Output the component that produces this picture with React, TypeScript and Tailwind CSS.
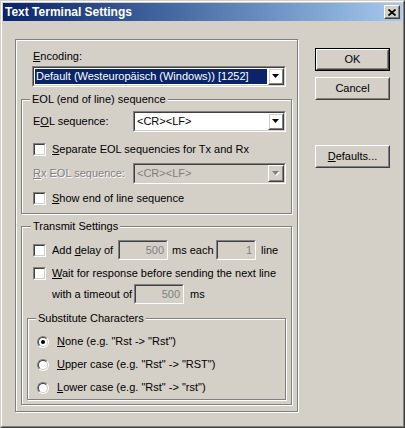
import type { ReactNode } from "react";

// Win2000 style 3D edges
const Sunken = ({
  className = "",
  innerClass = "",
  children,
}: {
  className?: string;
  innerClass?: string;
  children?: ReactNode;
}) => (
  <div
    className={
      "shrink-0 border border-t-[#808080] border-l-[#808080] border-r-white border-b-white " +
      className
    }
  >
    <div
      className={
        "h-full w-full border border-t-[#404040] border-l-[#404040] border-r-[#d4d0c8] border-b-[#d4d0c8] " +
        innerClass
      }
    >
      {children}
    </div>
  </div>
);

const Raised = ({ className = "", children }: { className?: string; children?: ReactNode }) => (
  <div
    className={
      "shrink-0 border border-t-white border-l-white border-r-[#404040] border-b-[#404040] " + className
    }
  >
    <div className="h-full w-full border border-t-[#d4d0c8] border-l-[#d4d0c8] border-r-[#808080] border-b-[#808080] flex items-center justify-center">
      {children}
    </div>
  </div>
);

const Arrow = ({ disabled }: { disabled?: boolean }) => (
  <svg width="8" height="5" viewBox="0 0 8 5">
    {disabled && <polygon points="1,1 8,1 4.5,5" fill="#fff" />}
    <polygon points="0,0 7,0 3.5,4" fill={disabled ? "#808080" : "#000"} />
  </svg>
);

const Combo = ({
  className,
  text,
  selected,
  disabled,
}: {
  className: string;
  text: string;
  selected?: boolean;
  disabled?: boolean;
}) => (
  <Sunken className={"h-[21px] " + className} innerClass={"flex " + (disabled ? "bg-[#d4d0c8]" : "bg-white")}>
    <div className="flex-1 flex p-[1px] min-w-0">
      <div
        className={
          "flex-1 flex items-center pl-[1px] whitespace-nowrap overflow-hidden " +
          (selected ? "bg-[#0a246a] text-white" : disabled ? "text-[#808080]" : "")
        }
      >
        {text}
      </div>
    </div>
    <Raised className="w-[16px] h-full">
      <Arrow disabled={disabled} />
    </Raised>
  </Sunken>
);

const Check = () => <Sunken className="w-[13px] h-[13px]" innerClass="bg-white" />;

const Radio = ({ on }: { on?: boolean }) => (
  <div className="shrink-0 w-[12px] h-[12px] rounded-full border border-t-[#808080] border-l-[#808080] border-r-white border-b-white">
    <div className="h-full w-full rounded-full border border-t-[#404040] border-l-[#404040] border-r-[#d4d0c8] border-b-[#d4d0c8] bg-white flex items-center justify-center">
      {on && <div className="w-[4px] h-[4px] rounded-full bg-black" />}
    </div>
  </div>
);

const Field = ({ className, value }: { className: string; value: string }) => (
  <Sunken
    className={"h-[20px] " + className}
    innerClass="bg-[#d4d0c8] flex items-center justify-end pr-[2px] text-[#808080]"
  >
    {value}
  </Sunken>
);

const Group = ({
  title,
  className,
  legend,
  children,
}: {
  title: string;
  className: string;
  legend: string;
  children?: ReactNode;
}) => (
  <div
    className={
      "relative shrink-0 border border-[#808080] shadow-[inset_1px_1px_0_#fff,1px_1px_0_#fff] flex flex-col " +
      className
    }
  >
    <span className={"absolute -top-[7px] bg-[#d4d0c8] px-[2px] leading-[13px] whitespace-nowrap " + legend}>
      {title}
    </span>
    {children}
  </div>
);

const U = ({ children }: { children: ReactNode }) => <span className="underline underline-offset-[1px]">{children}</span>;

export default function App() {
  return (
    <div className="w-[405px] h-[428px] bg-[#d4d0c8] font-['Liberation_Sans',Arial,sans-serif] text-[11px] leading-[13px] text-black border border-t-[#d4d0c8] border-l-[#d4d0c8] border-r-[#404040] border-b-[#404040]">
      <div className="h-full border border-t-white border-l-white border-r-[#808080] border-b-[#808080] p-[1px]">
        {/* title bar */}
        <div className="h-[18px] flex items-center justify-between bg-linear-to-r from-[#0a246a] to-[#a6caf0] pl-[2px] pr-[2px]">
          <span className="text-white font-bold text-[12px] leading-[14px]">Text Terminal Settings</span>
          <Raised className="w-[16px] h-[14px] bg-[#d4d0c8]">
            <svg width="8" height="7" viewBox="0 0 8 7">
              <path d="M0.5 0.5 L7.5 6.5 M7.5 0.5 L0.5 6.5" stroke="#000" strokeWidth="1.7" />
            </svg>
          </Raised>
        </div>

        <div className="flex items-start pl-[12px] pt-[18px]">
          {/* main panel */}
          <div className="w-[283px] h-[373px] shrink-0 border border-[#808080] shadow-[inset_1px_1px_0_#fff,1px_1px_0_#fff] flex flex-col">
            <div className="pl-[17px] pt-[10px]">
              <U>E</U>ncoding:
            </div>
            <Combo
              className="w-[254px] ml-[16px] mt-[3px]"
              text="Default (Westeuropäisch (Windows)) [1252]"
              selected
            />

            <Group title="EOL (end of line) sequence" legend="left-[8px]" className="w-[271px] h-[115px] ml-[5px] mt-[12px]">
              <div className="flex items-center mt-[11px]">
                <span className="pl-[11px] w-[111px] shrink-0">
                  E<U>O</U>L sequence:
                </span>
                <Combo className="w-[153px]" text="<CR><LF>" />
              </div>
              <div className="flex items-center mt-[11px] pl-[11px]">
                <Check />
                <span className="ml-[6px]">
                  <U>S</U>eparate EOL sequencies for Tx and Rx
                </span>
              </div>
              <div className="flex items-center mt-[7px]">
                <span className="pl-[11px] w-[111px] shrink-0 text-[#808080] [text-shadow:1px_1px_0_#fff]">
                  <U>R</U>x EOL sequence:
                </span>
                <Combo className="w-[153px]" text="<CR><LF>" disabled />
              </div>
              <div className="flex items-center mt-[8px] pl-[11px]">
                <Check />
                <span className="ml-[6px]">
                  <U>S</U>how end of line sequence
                </span>
              </div>
            </Group>

            <Group title="Transmit Settings" legend="left-[9px]" className="w-[271px] h-[179px] ml-[5px] mt-[12px]">
              <div className="flex items-center mt-[13px] pl-[11px] h-[20px]">
                <Check />
                <span className="ml-[6px] w-[66px] shrink-0">
                  Add <U>d</U>elay of
                </span>
                <Field className="w-[50px]" value="500" />
                <span className="pl-[4px] w-[48px] shrink-0">ms each</span>
                <Field className="w-[40px]" value="1" />
                <span className="ml-[5px]">line</span>
              </div>
              <div className="flex items-center mt-[7px] pl-[11px]">
                <Check />
                <span className="ml-[6px]">
                  <U>W</U>ait for response before sending the next line
                </span>
              </div>
              <div className="flex items-center mt-[4px] h-[20px]">
                <span className="pl-[30px] w-[112px] shrink-0">with a timeout of</span>
                <Field className="w-[50px]" value="500" />
                <span className="ml-[6px]">ms</span>
              </div>

              <Group title="Substitute Characters" legend="left-[8px]" className="w-[259px] h-[82px] ml-[5px] mt-[14px]">
                <div className="flex items-center mt-[16px] pl-[9px] h-[13px]">
                  <Radio on />
                  <span className="ml-[8px]">
                    <U>N</U>one (e.g. "Rst -&gt; "Rst")
                  </span>
                </div>
                <div className="flex items-center mt-[10px] pl-[9px] h-[13px]">
                  <Radio />
                  <span className="ml-[8px]">
                    <U>U</U>pper case (e.g. "Rst" -&gt; "RST")
                  </span>
                </div>
                <div className="flex items-center mt-[10px] pl-[9px] h-[13px]">
                  <Radio />
                  <span className="ml-[8px]">
                    <U>L</U>ower case (e.g. "Rst" -&gt; "rst")
                  </span>
                </div>
              </Group>
            </Group>
          </div>

          {/* buttons */}
          <div className="flex flex-col ml-[17px] mt-[9px]">
            <div className="w-[75px] h-[23px] border border-black">
              <Raised className="w-full h-full">OK</Raised>
            </div>
            <Raised className="w-[75px] h-[23px] mt-[6px]">Cancel</Raised>
            <Raised className="w-[75px] h-[23px] mt-[45px]">
              <span>
                <U>D</U>efaults...
              </span>
            </Raised>
          </div>
        </div>
      </div>
    </div>
  );
}
